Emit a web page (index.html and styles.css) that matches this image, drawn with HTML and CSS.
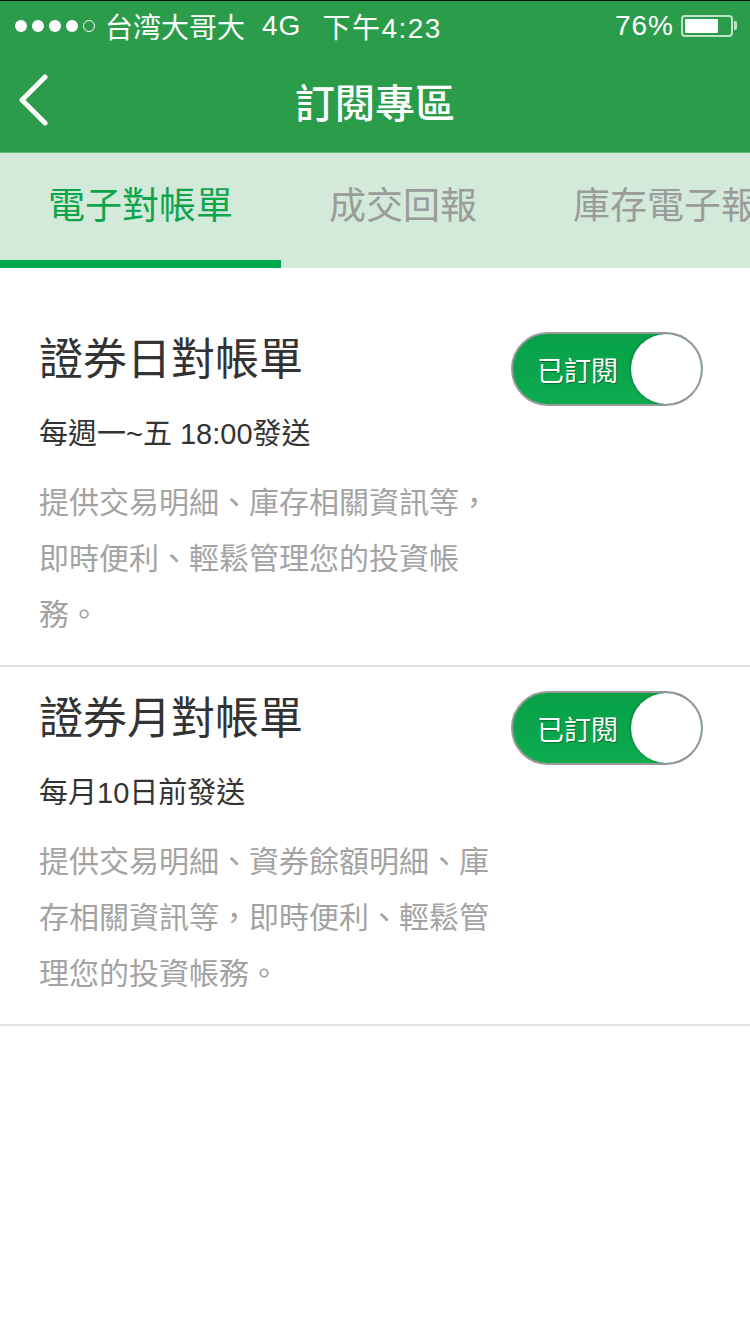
FILE: index.html
```html
<!DOCTYPE html>
<html lang="zh-Hant">
<head>
    <meta charset="UTF-8">
    <meta name="viewport" content="width=device-width, initial-scale=1.0">
    <title>訂閱專區</title>
    <link rel="stylesheet" href="styles.css">
</head>
<body>
    <div class="header">
        <div class="status-bar">
            <div class="status-left">
                <span class="signal">
                    <i class="dot"></i><i class="dot"></i><i class="dot"></i><i class="dot"></i><i class="dot empty"></i>
                </span>
                <span class="carrier">台湾大哥大</span>
                <span class="net">4G</span>
                <span class="time">下午4:23</span>
            </div>
            <div class="status-right">
                <span class="pct">76%</span>
                <span class="battery"><span class="battery-fill"></span></span>
                <span class="battery-nub"></span>
            </div>
        </div>
        <div class="nav-bar">
            <svg class="back" width="34" height="52" viewBox="0 0 34 52">
                <polyline points="28,3 5,26 28,49" fill="none" stroke="#fff" stroke-width="5" stroke-linecap="round" stroke-linejoin="round"/>
            </svg>
            <div class="nav-title">訂閱專區</div>
        </div>
    </div>

    <div class="tabs">
        <div class="tab active">電子對帳單</div>
        <div class="tab">成交回報</div>
        <div class="tab">庫存電子報</div>
    </div>

    <div class="list">
        <div class="item">
            <div class="item-text">
                <div class="item-title">證券日對帳單</div>
                <div class="item-sub">每週一~五 18:00發送</div>
                <div class="item-desc">提供交易明細、庫存相關資訊等，即時便利、輕鬆管理您的投資帳務。</div>
            </div>
            <div class="toggle">
                <span class="toggle-label">已訂閱</span>
                <span class="knob"></span>
            </div>
        </div>
        <div class="item">
            <div class="item-text">
                <div class="item-title">證券月對帳單</div>
                <div class="item-sub">每月10日前發送</div>
                <div class="item-desc">提供交易明細、資券餘額明細、庫存相關資訊等，即時便利、輕鬆管理您的投資帳務。</div>
            </div>
            <div class="toggle">
                <span class="toggle-label">已訂閱</span>
                <span class="knob"></span>
            </div>
        </div>
    </div>
</body>
</html>
```

FILE: styles.css
```css
body {
    margin: 0;
    padding: 0;
    width: 750px;
    background: #fff;
    font-family: "Liberation Sans", "Noto Sans CJK TC", sans-serif;
    color: #333;
}
.header {
    background: #2a9c4a;
    border-top: 1px solid #111;
    color: #fff;
}
.status-bar {
    height: 49px;
    display: flex;
    align-items: center;
    justify-content: space-between;
    padding: 0 13px 0 15px;
    font-size: 28px;
}
.status-left {
    display: flex;
    align-items: center;
}
.signal {
    display: flex;
    gap: 5px;
    margin-right: 10px;
}
.dot {
    width: 12px;
    height: 12px;
    border-radius: 50%;
    background: #fff;
    box-sizing: border-box;
}
.dot.empty {
    background: none;
    border: 1.5px solid #fff;
}
.net {
    margin-left: 17px;
    letter-spacing: 1px;
}
.time {
    margin-left: 21px;
    letter-spacing: 1.5px;
}
.status-right {
    display: flex;
    align-items: center;
}
.pct {
    letter-spacing: 1px;
}
.battery {
    margin-left: 7px;
    width: 52px;
    height: 22px;
    border: 2px solid #bfe3c8;
    border-radius: 4px;
    box-sizing: border-box;
    padding: 2px;
    display: flex;
}
.battery-fill {
    width: 76%;
    background: #fff;
    border-radius: 1px;
}
.battery-nub {
    width: 3px;
    height: 9px;
    background: #bfe3c8;
    border-radius: 0 2px 2px 0;
    margin-left: 1px;
}
.nav-bar {
    height: 102px;
    display: flex;
    align-items: center;
    justify-content: center;
    position: relative;
}
.back {
    position: absolute;
    left: 17px;
    top: 24px;
}
.nav-title {
    font-size: 40px;
    font-weight: 500;
}
.tabs {
    display: flex;
    overflow: hidden;
    white-space: nowrap;
    background: #d3eada;
    border-top: 1px solid #5cc07a;
}
.tab {
    flex: none;
    padding: 0 48px;
    font-size: 37px;
    line-height: 107px;
    color: #9b9b9b;
    border-bottom: 8px solid transparent;
}
.tab.active {
    color: #0ea54d;
    border-bottom-color: #00a94f;
}
.list {
    padding-top: 40px;
}
.item {
    display: flex;
    justify-content: space-between;
    align-items: flex-start;
    padding: 24px 47px 22px 39px;
    border-bottom: 2px solid #e2e2e2;
}
.item-text {
    width: 462px;
}
.item-title {
    font-size: 44px;
    line-height: 56px;
    color: #333;
}
.item-sub {
    margin-top: 26px;
    font-size: 29px;
    line-height: 40px;
    color: #333;
}
.item-desc {
    margin-top: 21px;
    font-size: 30px;
    line-height: 56px;
    color: #a3a3a3;
}
.toggle {
    width: 192px;
    height: 74px;
    box-sizing: border-box;
    border: 2px solid #9a9a9a;
    border-radius: 37px;
    background: linear-gradient(#07a046, #0eab50);
    display: flex;
    align-items: center;
    padding-left: 24px;
}
.toggle-label {
    color: #fff;
    font-size: 27px;
    text-shadow: 1px 1px 1px rgba(0, 0, 0, 0.35);
}
.knob {
    margin-left: auto;
    width: 70px;
    height: 70px;
    border-radius: 50%;
    background: #fff;
    box-shadow: -1px 0 2px rgba(0, 0, 0, 0.25);
}
```
